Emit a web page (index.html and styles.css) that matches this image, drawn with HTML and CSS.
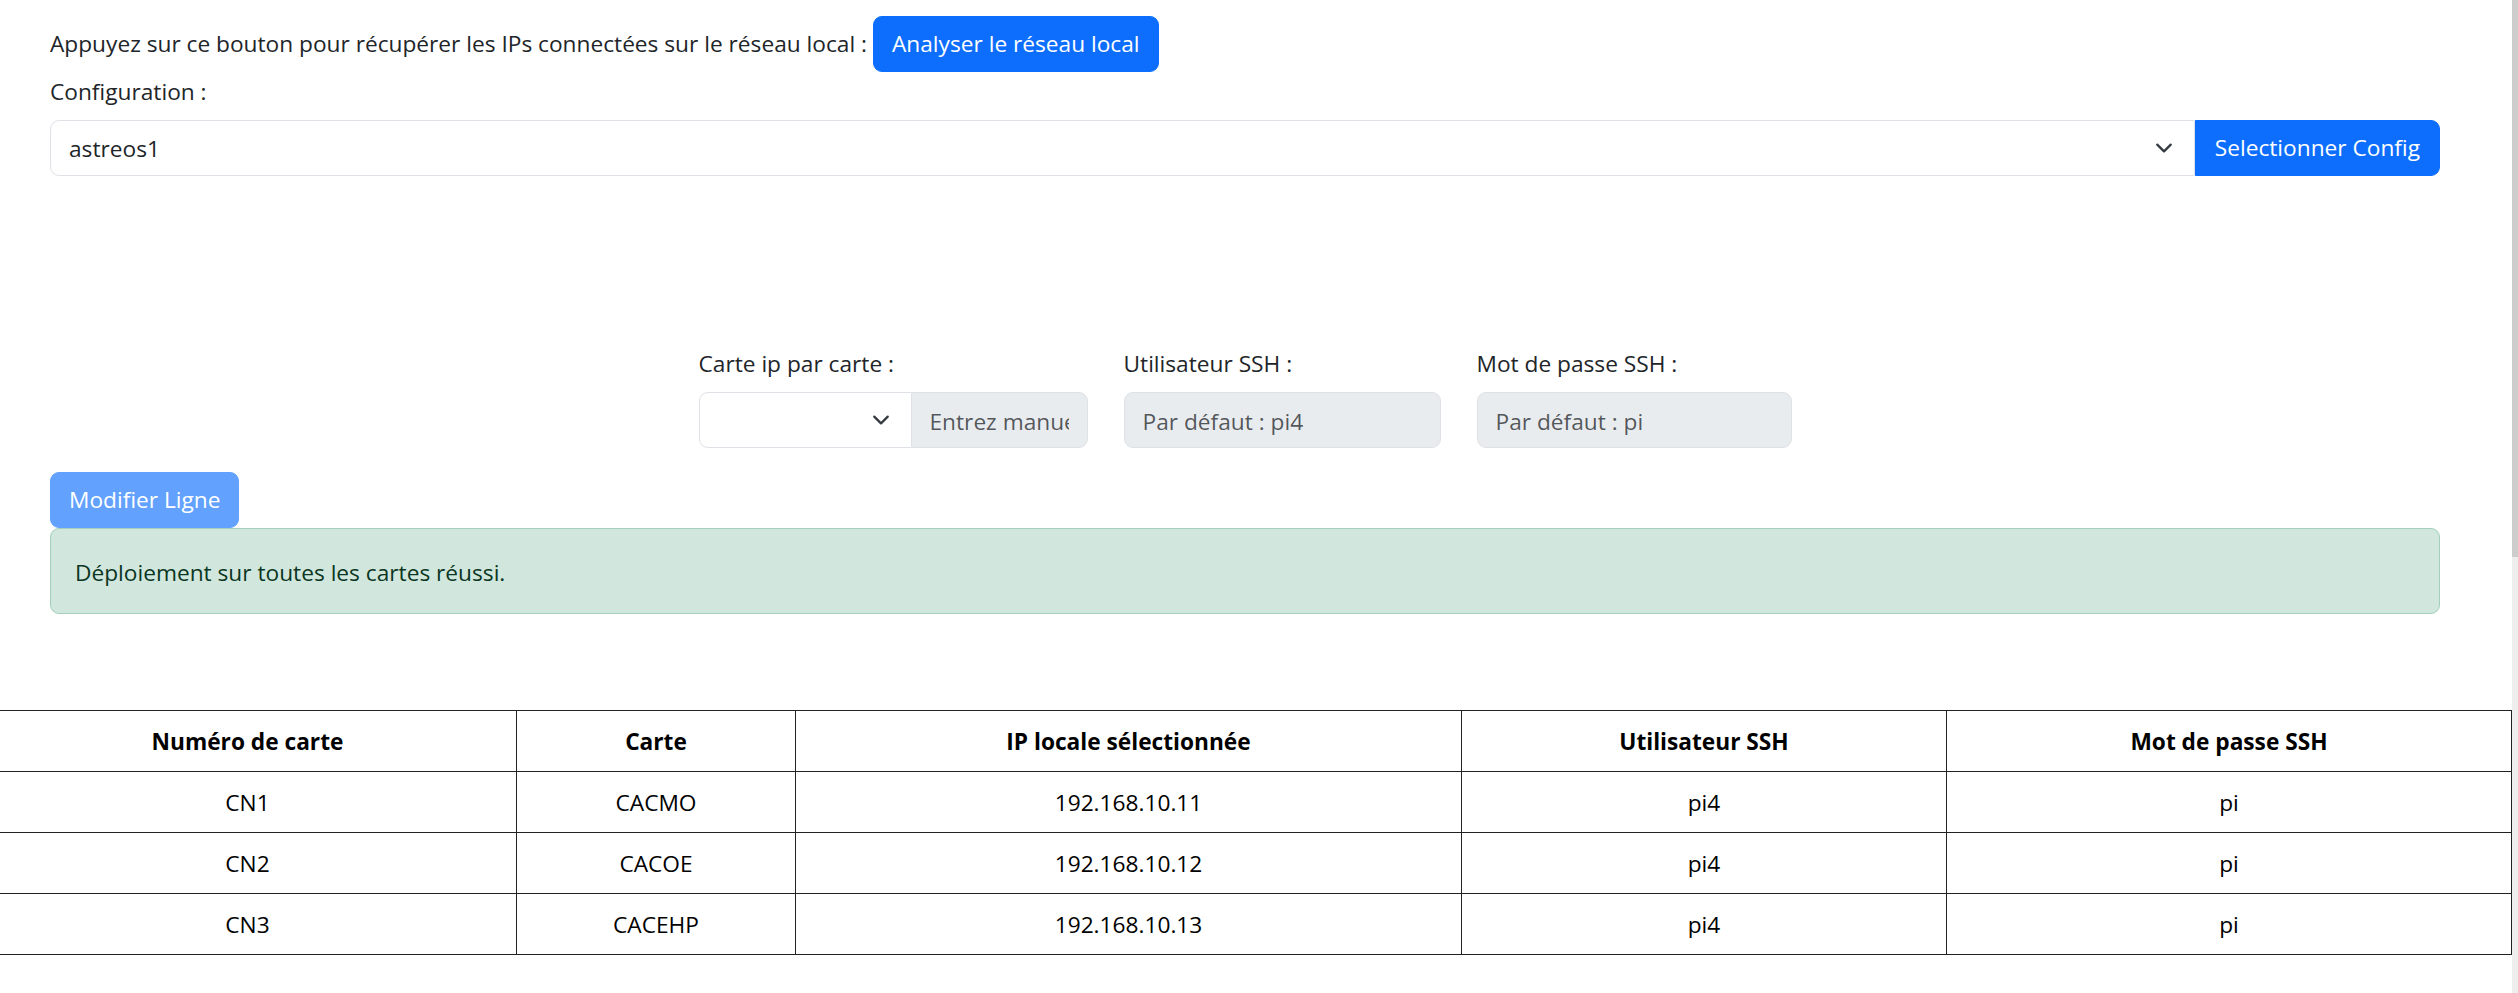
FILE: index.html
```html
<!DOCTYPE html>
<html lang="fr">
<head>
<meta charset="utf-8">
<title>Déploiement</title>
<link rel="stylesheet" href="styles.css">
</head>
<body>
<div class="page">
  <div class="scan-row">
    <span class="scan-text">Appuyez sur ce bouton pour récupérer les IPs connectées sur le réseau local :</span>
    <button class="btn btn-primary">Analyser le réseau local</button>
  </div>
  <label class="form-label">Configuration :</label>
  <div class="input-group config-group">
    <div class="select select-wide">
      <span>astreos1</span>
      <svg class="chevron" width="18" height="18" viewBox="0 0 16 16"><path d="m2 5 6 6 6-6" fill="none" stroke="#343a40" stroke-width="2" stroke-linecap="round" stroke-linejoin="round"/></svg>
    </div>
    <button class="btn btn-primary btn-end">Selectionner Config</button>
  </div>

  <div class="fields">
    <div class="field">
      <label class="form-label">Carte ip par carte :</label>
      <div class="input-group">
        <div class="select select-small">
          <span></span>
          <svg class="chevron" width="18" height="18" viewBox="0 0 16 16"><path d="m2 5 6 6 6-6" fill="none" stroke="#343a40" stroke-width="2" stroke-linecap="round" stroke-linejoin="round"/></svg>
        </div>
        <input class="form-control input-ip" type="text" placeholder="Entrez manuellement l'IP" readonly>
      </div>
    </div>
    <div class="field">
      <label class="form-label">Utilisateur SSH :</label>
      <input class="form-control input-user" type="text" placeholder="Par défaut : pi4" readonly>
    </div>
    <div class="field">
      <label class="form-label">Mot de passe SSH :</label>
      <input class="form-control input-pass" type="text" placeholder="Par défaut : pi" readonly>
    </div>
  </div>

  <button class="btn btn-primary btn-disabled">Modifier Ligne</button>
  <div class="alert-success">Déploiement sur toutes les cartes réussi.</div>
</div>

<table class="cards">
  <colgroup>
    <col class="c1"><col class="c2"><col class="c3"><col class="c4"><col class="c5">
  </colgroup>
  <thead>
    <tr><th>Numéro de carte</th><th>Carte</th><th>IP locale sélectionnée</th><th>Utilisateur SSH</th><th>Mot de passe SSH</th></tr>
  </thead>
  <tbody>
    <tr><td>CN1</td><td>CACMO</td><td>192.168.10.11</td><td>pi4</td><td>pi</td></tr>
    <tr><td>CN2</td><td>CACOE</td><td>192.168.10.12</td><td>pi4</td><td>pi</td></tr>
    <tr><td>CN3</td><td>CACEHP</td><td>192.168.10.13</td><td>pi4</td><td>pi</td></tr>
  </tbody>
</table>

<div class="scrollbar"><div class="scrollbar-thumb"></div></div>
</body>
</html>
```

FILE: styles.css
```css
* { box-sizing: border-box; }

html, body {
  margin: 0;
  padding: 0;
  background: #fff;
  overflow: hidden;
}

body {
  font-family: "Segoe UI", "Open Sans", "Noto Sans", sans-serif;
  font-size: 22.7px;
  line-height: 36px;
  color: #212529;
}

.page {
  padding: 16px 78px 0 50px;
}

.scan-row {
  display: flex;
  align-items: baseline;
}

.scan-text {
  margin-right: 6px;
}

.btn {
  font: inherit;
  line-height: 36px;
  padding: 9px 18px;
  border: 1px solid transparent;
  border-radius: 9px;
  cursor: pointer;
}

.btn-primary {
  background: #0d6efd;
  border-color: #0d6efd;
  color: #fff;
}

.btn-disabled {
  background: #62a1fe;
  border-color: #62a1fe;
  display: block;
  margin-top: 24px;
}

.form-label {
  display: block;
  padding-top: 2px;
  margin-bottom: 10px;
}

.input-group {
  display: flex;
  align-items: stretch;
}

.select {
  display: flex;
  align-items: center;
  justify-content: space-between;
  height: 56px;
  padding: 10px 21px 8px 18px;
  border: 1px solid #dee2e6;
  border-radius: 9px;
  background: #fff;
}

.select-wide {
  flex: 1;
  border-top-right-radius: 0;
  border-bottom-right-radius: 0;
}

.select-small {
  width: 213px;
  border-top-right-radius: 0;
  border-bottom-right-radius: 0;
}

.chevron {
  display: block;
  flex: none;
  margin-top: -2px;
}

.btn-end {
  padding: 9px 19px;
  border-top-left-radius: 0;
  border-bottom-left-radius: 0;
  white-space: nowrap;
}

.fields {
  display: flex;
  justify-content: center;
  gap: 36px;
  margin-top: 168px;
}

.form-control {
  display: block;
  height: 56px;
  font: inherit;
  line-height: 36px;
  padding: 10px 18px 8px;
  border: 1px solid #dee2e6;
  border-radius: 9px;
  background: #e9ecef;
  color: #212529;
  outline: none;
}

.form-control::placeholder {
  color: rgba(33, 37, 41, 0.75);
  opacity: 1;
}

.input-ip {
  width: 177px;
  margin-left: -1px;
  border-top-left-radius: 0;
  border-bottom-left-radius: 0;
}

.input-user { width: 317px; }
.input-pass { width: 315px; }

.alert-success {
  padding: 26px 24px 22px;
  border: 1px solid #a3cfbb;
  border-radius: 9px;
  background: #d1e7dd;
  color: #0a3622;
}

.cards {
  margin: 96px 0 0 -22px;
  width: 2533px;
  table-layout: fixed;
  border-collapse: collapse;
}

.cards .c1 { width: 538px; }
.cards .c2 { width: 279px; }
.cards .c3 { width: 666px; }
.cards .c4 { width: 485px; }
.cards .c5 { width: 565px; }

.cards th,
.cards td {
  border: 1px solid #222;
  padding: 13px 12px 11px;
  text-align: center;
  line-height: 36px;
}

.cards th {
  font-weight: 700;
  color: #000;
}

.cards td {
  color: #000;
}

.scrollbar {
  position: fixed;
  top: 0;
  right: 0;
  width: 6px;
  height: 100%;
  background: #eeeeee;
}

.scrollbar-thumb {
  height: 557px;
  background: #cdcdcd;
}
```
